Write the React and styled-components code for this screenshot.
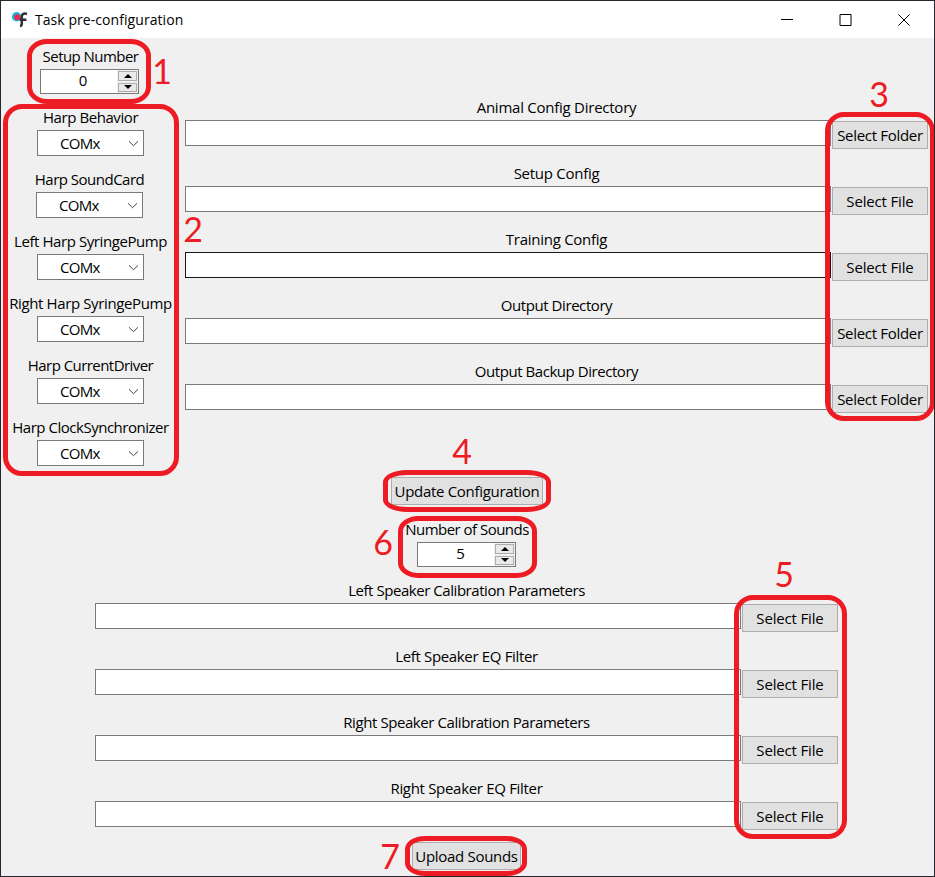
import React from "react";
import styled, { createGlobalStyle } from "styled-components";

const GlobalStyle = createGlobalStyle`
  * { box-sizing: border-box; }
  body { margin: 0; background: #f0f0f0; }
`;

const Window = styled.div`
  position: relative;
  width: 935px;
  height: 877px;
  border: 1px solid #26262b;
  background: #f0f0f0;
  overflow: hidden;
  color: #000;
  font: 15px/20px "Open Sans", "Noto Sans", sans-serif;
  white-space: nowrap;
`;

const TitleBar = styled.header`
  display: flex;
  align-items: center;
  height: 37px;
  padding: 0 24px 0 10px;
  background: #fff;
`;

const Title = styled.h1`
  flex: 1;
  margin: 0 0 0 7px;
  font-size: 14px;
  font-weight: 400;
  letter-spacing: 0.06px;
`;

const WindowControls = styled.div`
  display: flex;
  gap: 46.5px;
`;

const Glyph = styled.svg`
  display: block;
  flex: none;
  overflow: visible;
`;

const Text = styled.span`
  display: block;
  height: 20px;
  letter-spacing: ${(p) => p.$track ?? -0.3}px;
`;

const Config = styled.section`
  display: flex;
  height: 439px;
  padding-left: 8px;
`;

const Sidebar = styled.div`
  display: flex;
  flex-direction: column;
  align-items: center;
  width: 163px;
  padding-top: 8px;
`;

const Ports = styled.div`
  display: grid;
  grid-auto-rows: 62px;
  justify-items: center;
  margin-top: 13px;
`;

const Port = styled.div`
  display: flex;
  flex-direction: column;
  align-items: center;
  width: ${(p) => (p.$nudge ? 161 : 163)}px;
  margin-right: ${(p) => (p.$nudge ? 2 : 0)}px;
`;

const Combo = styled.div`
  display: flex;
  align-items: center;
  justify-content: space-between;
  width: 107px;
  height: 26px;
  margin-top: 3px;
  padding: 0 5px 0 22px;
  border: 1px solid #7a7a7a;
  background: #fff;
`;

const SpinBox = styled.div`
  display: flex;
  flex: none;
  width: 99px;
  height: 25px;
  margin: 3px ${(p) => p.$shift ?? 0}px 0 0;
  border: 1px solid #7a7a7a;
  background: #fff;
`;

const SpinValue = styled.span`
  flex: 1;
  padding-left: 8px;
  line-height: 21px;
  text-align: center;
`;

const SpinButtons = styled.div`
  display: flex;
  flex-direction: column;
  gap: 2px;
  width: 21px;
  padding: 1px;
  background: #f0f0f0;
`;

const SpinButton = styled.div`
  display: flex;
  align-items: center;
  justify-content: center;
  flex: 1;
  border: 1px solid #adadad;
  background: #e9e9e9;
`;

const PathList = styled.div`
  display: grid;
  grid-auto-rows: 66px;
  align-content: start;
  width: 743px;
  margin: ${(p) => p.$margin};
`;

const PathField = styled.div`
  display: flex;
  flex-direction: column;
  align-items: center;
`;

const PathRow = styled.div`
  display: flex;
  gap: 1px;
  width: 100%;
  margin-top: 3px;
`;

const PathInput = styled.div`
  width: 646px;
  height: 26px;
  border: 1px solid ${(p) => (p.$focused ? "#171717" : "#7a7a7a")};
  background: #fff;
`;

const Button = styled.button`
  display: flex;
  align-items: center;
  justify-content: center;
  width: ${(p) => p.$width}px;
  height: 28px;
  margin: ${(p) => p.$margin ?? "0"};
  padding: 0;
  border: 1px solid #adadad;
  background: #e1e1e1;
  color: #000;
  font: inherit;
`;

const Actions = styled.div`
  display: flex;
  flex-direction: column;
  align-items: center;
  width: 932px;
`;

const SoundCount = styled.div`
  display: flex;
  flex-direction: column;
  align-items: center;
  margin-top: 14px;
`;

const Outline = styled.div`
  position: absolute;
  left: ${(p) => p.$x - 1}px;
  top: ${(p) => p.$y - 1}px;
  width: ${(p) => p.$w}px;
  height: ${(p) => p.$h}px;
  border: 5px solid #ed1c24;
  border-radius: ${(p) => p.$r ?? "19px"};
`;

const Marker = styled.span`
  position: absolute;
  left: ${(p) => p.$x - 12}px;
  top: ${(p) => p.$y - 22}px;
  width: 20px;
  color: #ed1c24;
  font: 34px/40px Lato, sans-serif;
  text-align: center;
`;

const ports = [
  ["Harp Behavior", -0.42],
  ["Harp SoundCard", -0.5],
  ["Left Harp SyringePump", -0.42],
  ["Right Harp SyringePump", -0.38],
  ["Harp CurrentDriver", -0.55],
  ["Harp ClockSynchronizer", -0.48],
];

const configPaths = [
  ["Animal Config Directory", -0.25, "Folder"],
  ["Setup Config", -0.27, "File"],
  ["Training Config", -0.27, "File"],
  ["Output Directory", -0.43, "Folder"],
  ["Output Backup Directory", -0.45, "Folder"],
];

const soundPaths = [
  ["Left Speaker Calibration Parameters", -0.45, "File"],
  ["Left Speaker EQ Filter", -0.34, "File"],
  ["Right Speaker Calibration Parameters", -0.42, "File"],
  ["Right Speaker EQ Filter", -0.31, "File"],
];

const outlines = [
  { x: 27, y: 39, w: 124, h: 65, r: "20px / 17px" },
  { x: 3, y: 104, w: 176, h: 372 },
  { x: 825, y: 112, w: 110, h: 309 },
  { x: 383, y: 470, w: 168, h: 42, r: "24px / 12px" },
  { x: 398, y: 516, w: 139, h: 62, r: "20px / 15px" },
  { x: 734, y: 595, w: 113, h: 244 },
  { x: 405, y: 836, w: 122, h: 40, r: "20px / 13px" },
];

const markers = [
  [1, 163, 72],
  [2, 194, 230],
  [3, 880, 95],
  [4, 463, 452],
  [5, 785, 575],
  [6, 384, 543],
  [7, 391, 857],
];

function Spinner({ value, shift }) {
  return (
    <SpinBox $shift={shift}>
      <SpinValue>{value}</SpinValue>
      <SpinButtons>
        <SpinButton>
          <Glyph width="8" height="4"><path d="M0 4 4 0l4 4z" /></Glyph>
        </SpinButton>
        <SpinButton>
          <Glyph width="8" height="4"><path d="M0 0h8L4 4z" /></Glyph>
        </SpinButton>
      </SpinButtons>
    </SpinBox>
  );
}

function Paths({ items, margin, focused }) {
  return (
    <PathList $margin={margin}>
      {items.map(([label, track, kind]) => (
        <PathField key={label}>
          <Text $track={track}>{label}</Text>
          <PathRow>
            <PathInput $focused={label === focused} />
            <Button $width={96} $margin="1px 0 0">
              <Text $track={kind === "File" ? -0.16 : -0.3}>Select {kind}</Text>
            </Button>
          </PathRow>
        </PathField>
      ))}
    </PathList>
  );
}

export default function App() {
  return (
    <>
      <GlobalStyle />
      <Window>
        <TitleBar>
          <Glyph width="17" height="17" viewBox="0 0 17 17">
            <circle cx="5.6" cy="5.8" r="4.7" fill="#18b5dc" />
            <circle cx="6.2" cy="6.2" r="2.9" fill="#f3244f" />
            <path d="M16 3c-3-1.2-5.2 0-5.2 2.8v6.6c0 1.6-.6 2.4-1.8 2.6M8.6 8.7h6.8" fill="none" stroke="#303034" strokeWidth="2.5" />
          </Glyph>
          <Title>Task pre-configuration</Title>
          <WindowControls>
            <Glyph width="12" height="12"><path d="M0 5.5h12" stroke="#000" /></Glyph>
            <Glyph width="12" height="12"><path d="M0 .5h11v11H0z" fill="none" stroke="#000" /></Glyph>
            <Glyph width="12" height="12"><path d="m.3.3 11.4 11.4M11.7.3.3 11.7" stroke="#000" /></Glyph>
          </WindowControls>
        </TitleBar>
        <Config>
          <Sidebar>
            <Text $track={-0.55}>Setup Number</Text>
            <Spinner value={0} shift={2} />
            <Ports>
              {ports.map(([label, track], i) => (
                <Port key={label} $nudge={i === 1}>
                  <Text $track={track}>{label}</Text>
                  <Combo>
                    <Text $track={-0.7}>COMx</Text>
                    <Glyph width="9" height="5"><path d="m0 .3 4.5 4.4L9 .3" fill="none" stroke="#404040" /></Glyph>
                  </Combo>
                </Port>
              ))}
            </Ports>
          </Sidebar>
          <Paths items={configPaths} margin="59px 0 0 13px" focused="Training Config" />
        </Config>
        <Actions>
          <Button $width={152}><Text>Update Configuration</Text></Button>
          <SoundCount>
            <Text $track={-0.52}>Number of Sounds</Text>
            <Spinner value={5} />
          </SoundCount>
        </Actions>
        <Paths items={soundPaths} margin="13px 0 0 94px" />
        <Actions>
          <Button $width={109} $margin="-2px 1px 0 0"><Text>Upload Sounds</Text></Button>
        </Actions>
        {outlines.map((o) => (
          <Outline key={`${o.x}-${o.y}`} $x={o.x} $y={o.y} $w={o.w} $h={o.h} $r={o.r} />
        ))}
        {markers.map(([n, x, y]) => (
          <Marker key={n} $x={x} $y={y}>{n}</Marker>
        ))}
      </Window>
    </>
  );
}
